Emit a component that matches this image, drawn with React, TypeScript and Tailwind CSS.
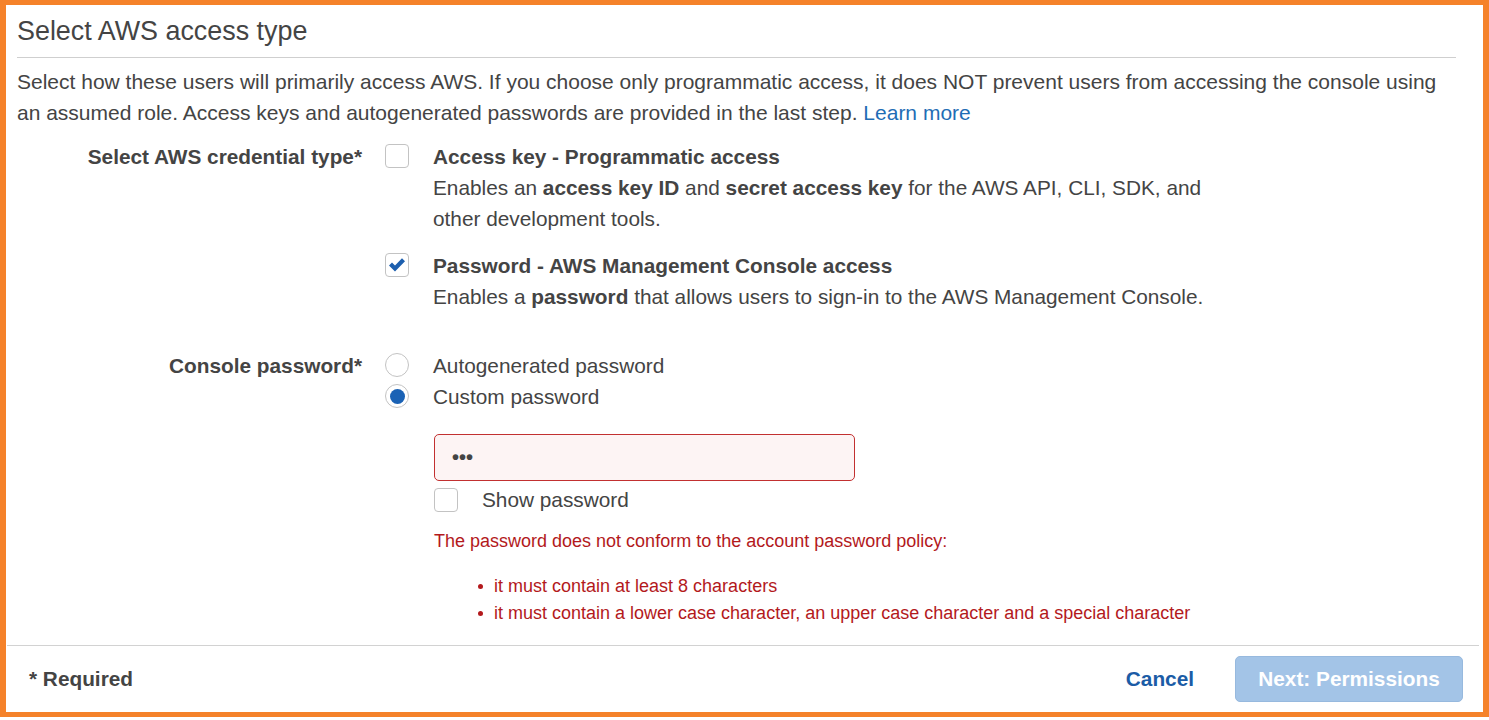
import React, { useState } from 'react';

function CheckBox({ checked }: { checked: boolean }) {
  return (
    <span className="w-[24px] h-[24px] shrink-0 rounded-[4px] border border-[#c3c3c3] bg-white flex items-center justify-center">
      {checked && (
        <svg width="18" height="16" viewBox="0 0 18 16">
          <path d="M1 8.4 L4 5.4 L7 8.4 L14 1.2 L17 4.2 L7 14.4 Z" fill="#1d5fae" />
        </svg>
      )}
    </span>
  );
}

function Radio({ checked }: { checked: boolean }) {
  return (
    <span className="w-[24px] h-[24px] shrink-0 rounded-full border border-[#c3c3c3] bg-white flex items-center justify-center">
      {checked && <span className="w-[15px] h-[15px] rounded-full bg-[#1a62b5]" />}
    </span>
  );
}

export default function App() {
  const [accessKey] = useState(false);
  const [consoleAccess] = useState(true);

  return (
    <div className="w-[1489px] h-[720px] bg-white text-[#444] font-['Liberation_Sans',Arial,sans-serif]">
      <div className="h-[717px] flex flex-col border-[#f5822a] border-t-[5px] border-b-[5px] border-l-[6px] border-r-[6px]">
        <div className="flex-1 pl-[11px] pr-[27px]">
          <h2 className="pt-[8px] pb-[8px] text-[26.9px] leading-[36px] border-b border-[#cfcfcf]">
            Select AWS access type
          </h2>
          <p className="mt-[8px] text-[21px] leading-[31px]">
            Select how these users will primarily access AWS. If you choose only programmatic access, it does NOT prevent users from accessing the console using
            <br />
            an assumed role. Access keys and autogenerated passwords are provided in the last step.{' '}
            <a className="text-[#1f6db5]">Learn more</a>
          </p>

          {/* credential type */}
          <div className="mt-[12.5px] flex text-[20.8px] leading-[31px]">
            <div className="w-[345px] shrink-0 text-right font-bold">Select AWS credential type*</div>
            <div className="ml-[23px]">
              <div className="flex">
                <div className="pt-[3.5px]"><CheckBox checked={accessKey} /></div>
                <div className="ml-[24px]">
                  <div className="font-bold">Access key - Programmatic access</div>
                  <div>
                    Enables an <b>access key ID</b> and <b>secret access key</b> for the AWS API, CLI, SDK, and
                    <br />
                    other development tools.
                  </div>
                </div>
              </div>
              <div className="flex mt-[16px]">
                <div className="pt-[3.5px]"><CheckBox checked={consoleAccess} /></div>
                <div className="ml-[24px]">
                  <div className="font-bold">Password - AWS Management Console access</div>
                  <div>
                    Enables a <b>password</b> that allows users to sign-in to the AWS Management Console.
                  </div>
                </div>
              </div>
            </div>
          </div>

          {/* console password */}
          <div className="mt-[38px] flex text-[20.8px] leading-[31px]">
            <div className="w-[345px] shrink-0 text-right font-bold">Console password*</div>
            <div className="ml-[23px]">
              <div className="flex items-center h-[31px]">
                <Radio checked={false} />
                <span className="ml-[24px]">Autogenerated password</span>
              </div>
              <div className="flex items-center h-[31px]">
                <Radio checked={true} />
                <span className="ml-[24px]">Custom password</span>
              </div>
              <div className="ml-[49px] mt-[22px]">
                <div className="w-[421px] h-[47px] rounded-[5px] border border-[#c23030] bg-[#fdf4f4] flex items-center pl-[17px] text-[20px] font-bold tracking-[0px] text-[#444]">
                  •••
                </div>
                <div className="mt-[5px] h-[28px] flex items-center">
                  <CheckBox checked={false} />
                  <span className="ml-[24px]">Show password</span>
                </div>
                <p className="mt-[14px] text-[18px] leading-[27px] text-[#b3191c]">
                  The password does not conform to the account password policy:
                </p>
                <ul className="mt-[18px] text-[18px] leading-[27px] text-[#b3191c]">
                  <li className="flex items-center pl-[44px]">
                    <span className="w-[5px] h-[5px] rounded-full bg-[#b3191c] shrink-0" />
                    <span className="ml-[11px]">it must contain at least 8 characters</span>
                  </li>
                  <li className="flex items-center pl-[44px]">
                    <span className="w-[5px] h-[5px] rounded-full bg-[#b3191c] shrink-0" />
                    <span className="ml-[11px]">it must contain a lower case character, an upper case character and a special character</span>
                  </li>
                </ul>
              </div>
            </div>
          </div>
        </div>

        {/* footer */}
        <div className="h-[67px] ml-[1px] mr-[4px] border-t border-[#d2d2d2] flex items-center text-[20.8px]">
          <div className="pl-[22px] font-bold">* Required</div>
          <div className="ml-auto flex items-center mr-[16px]">
            <span className="font-bold text-[#1b5ca6]">Cancel</span>
            <button className="ml-[41px] w-[228px] h-[46px] rounded-[5px] bg-[#a3c4e7] border border-[#97b9de] text-white font-bold">
              Next: Permissions
            </button>
          </div>
        </div>
      </div>
    </div>
  );
}
